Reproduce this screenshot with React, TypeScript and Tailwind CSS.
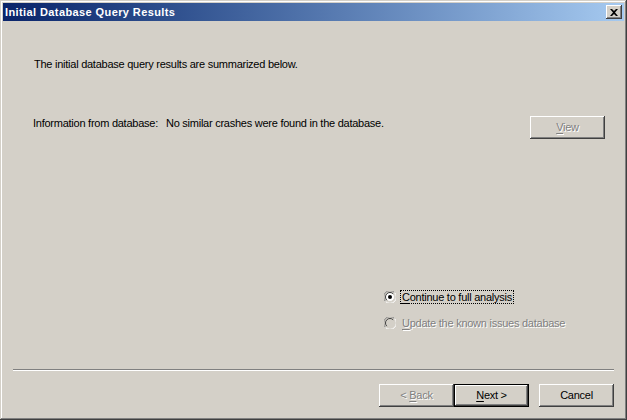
const font = { fontFamily: '"Liberation Sans", Arial, sans-serif' };

function Btn({
  label,
  hot,
  disabled,
  isDefault,
  className = '',
}: {
  label: [string, string, string];
  hot?: boolean;
  disabled?: boolean;
  isDefault?: boolean;
  className?: string;
}) {
  const [pre, key, post] = label;
  return (
    <div
      className={
        'w-[75px] h-[23px] flex items-center justify-center bg-[#D4D0C8] text-[11px] leading-none tracking-[-0.25px] ' +
        (isDefault
          ? 'border border-black shadow-[inset_-1px_-1px_#404040,inset_1px_1px_#fff,inset_-2px_-2px_#808080] '
          : 'shadow-[inset_-1px_-1px_#404040,inset_1px_1px_#fff,inset_-2px_-2px_#808080,inset_2px_2px_#D4D0C8] ') +
        (disabled ? 'text-[#808080] [text-shadow:1px_1px_0_#fff] ' : 'text-black ') +
        className
      }
    >
      <span>
        {pre}
        <span className={hot ? 'underline underline-offset-2' : ''}>{key}</span>
        {post}
      </span>
    </div>
  );
}

function Radio({ checked, disabled }: { checked?: boolean; disabled?: boolean }) {
  return (
    <svg width="12" height="12" viewBox="0 0 12 12" className="shrink-0">
      <path d="M10.5 1.5 A6 6 0 0 0 1.5 10.5" fill="none" stroke="#808080" strokeWidth="1" />
      <circle cx="6" cy="6" r="4.5" fill={disabled ? '#D4D0C8' : '#fff'} stroke="#D4D0C8" />
      <path d="M9.2 2.8 A4.5 4.5 0 0 0 2.8 9.2" fill="none" stroke="#404040" strokeWidth="1" />
      <path d="M10.5 1.5 A6 6 0 0 1 1.5 10.5" fill="none" stroke="#fff" strokeWidth="1" />
      {checked && <circle cx="6" cy="6" r="2" fill="#000" />}
    </svg>
  );
}

export default function App() {
  return (
    <div
      className="w-[627px] h-[420px] bg-[#D4D0C8] p-[3px] flex flex-col select-none shadow-[inset_-1px_-1px_#404040,inset_1px_1px_#D4D0C8,inset_-2px_-2px_#808080,inset_2px_2px_#fff]"
      style={font}
    >
      {/* title bar */}
      <div className="h-[18px] flex items-center pl-[2px] pr-[2px] bg-gradient-to-r from-[#0A246A] to-[#A6CAF0]">
        <span className="text-white font-bold text-[11px] tracking-[0.4px]">Initial Database Query Results</span>
        <div className="ml-auto w-[16px] h-[14px] bg-[#D4D0C8] flex items-center justify-center shadow-[inset_-1px_-1px_#404040,inset_1px_1px_#fff,inset_-2px_-2px_#808080]">
          <svg width="8" height="7" viewBox="0 0 8 7">
            <path d="M0 0h2l2 2 2-2h2L5 3.5 8 7H6L4 5 2 7H0l3-3.5z" fill="#000" />
          </svg>
        </div>
      </div>

      {/* body */}
      <div className="flex-1 flex flex-col text-[11px] leading-[14px] tracking-[-0.25px] text-black">
        <p className="mt-[36px] pl-[31px]">The initial database query results are summarized below.</p>

        <div className="mt-[45px] flex items-start pl-[30px] pr-[19px]">
          <span>Information from database:</span>
          <span className="ml-[8px]">No similar crashes were found in the database.</span>
          <Btn label={['', 'V', 'iew']} hot disabled className="ml-auto" />
        </div>

        <div className="mt-[151px] ml-[381px] flex flex-col gap-[12px]">
          <div className="flex items-center h-[14px]">
            <Radio checked />
            <span className="ml-[4px] px-[1px] border border-dotted border-black leading-[12px]">
              <span className="underline underline-offset-2">C</span>ontinue to full analysis
            </span>
          </div>
          <div className="flex items-center h-[14px]">
            <Radio disabled />
            <span className="ml-[5px] px-[1px] text-[#808080] [text-shadow:1px_1px_0_#fff]">
              <span className="underline underline-offset-2">U</span>pdate the known issues database
            </span>
          </div>
        </div>

        <div className="mt-auto mx-[10px] h-[2px] border-t border-[#808080] border-b border-b-white" />

        <div className="mt-[13px] mb-[10px] flex pr-[10px] justify-end">
          <Btn label={['< ', 'B', 'ack']} hot disabled />
          <Btn label={['', 'N', 'ext >']} hot isDefault />
          <Btn label={['Cancel', '', '']} className="ml-[10px]" />
        </div>
      </div>
    </div>
  );
}
